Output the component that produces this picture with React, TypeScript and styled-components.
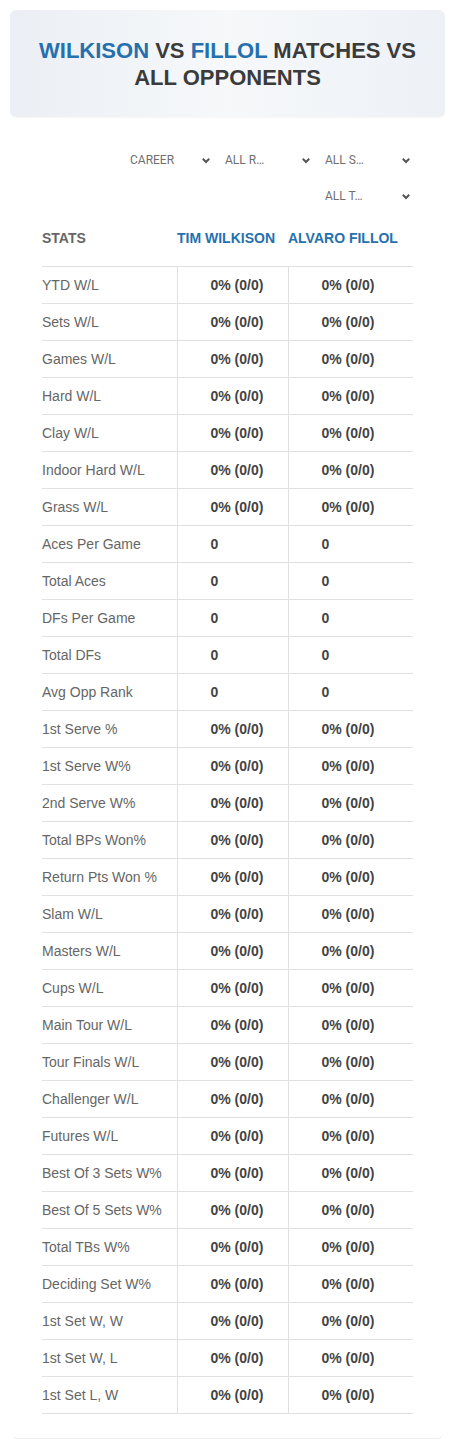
import styled, { createGlobalStyle } from 'styled-components'

const GlobalStyle = createGlobalStyle`
  body {
    margin: 0;
    background: #fff;
    font-family: "Liberation Sans", Arial, sans-serif;
  }
`

const stats: { label: string; count?: boolean }[] = [
  { label: 'YTD W/L' },
  { label: 'Sets W/L' },
  { label: 'Games W/L' },
  { label: 'Hard W/L' },
  { label: 'Clay W/L' },
  { label: 'Indoor Hard W/L' },
  { label: 'Grass W/L' },
  { label: 'Aces Per Game', count: true },
  { label: 'Total Aces', count: true },
  { label: 'DFs Per Game', count: true },
  { label: 'Total DFs', count: true },
  { label: 'Avg Opp Rank', count: true },
  { label: '1st Serve %' },
  { label: '1st Serve W%' },
  { label: '2nd Serve W%' },
  { label: 'Total BPs Won%' },
  { label: 'Return Pts Won %' },
  { label: 'Slam W/L' },
  { label: 'Masters W/L' },
  { label: 'Cups W/L' },
  { label: 'Main Tour W/L' },
  { label: 'Tour Finals W/L' },
  { label: 'Challenger W/L' },
  { label: 'Futures W/L' },
  { label: 'Best Of 3 Sets W%' },
  { label: 'Best Of 5 Sets W%' },
  { label: 'Total TBs W%' },
  { label: 'Deciding Set W%' },
  { label: '1st Set W, W' },
  { label: '1st Set W, L' },
  { label: '1st Set L, W' },
]

const filters = [
  { label: 'CAREER', width: 95 },
  { label: 'ALL R…', width: 100 },
  { label: 'ALL S…', width: 100 },
  { label: 'ALL T…', width: 100 },
]

function Chevron() {
  return (
    <svg width="10" height="7" viewBox="0 0 10 7">
      <path d="M1.8 1.8 L5 5 L8.2 1.8" fill="none" stroke="#555" strokeWidth="2" />
    </svg>
  )
}

export default function App() {
  return (
    <>
      <GlobalStyle />
      <Hero>
        <Title>
          <Name>WILKISON</Name> VS <Name>FILLOL</Name> MATCHES VS ALL OPPONENTS
        </Title>
      </Hero>
      <Panel>
        <Filters>
          {filters.map(f => (
            <Select key={f.label} $width={f.width}>
              <span>{f.label}</span>
              <Chevron />
            </Select>
          ))}
        </Filters>
        <Table>
          <colgroup>
            <col style={{ width: 135 }} />
            <col style={{ width: 111 }} />
            <col style={{ width: 125 }} />
          </colgroup>
          <thead>
            <tr>
              <HeadCell>STATS</HeadCell>
              <HeadCell $player>TIM WILKISON</HeadCell>
              <HeadCell $player>ALVARO FILLOL</HeadCell>
            </tr>
          </thead>
          <tbody>
            {stats.map(s => (
              <Row key={s.label}>
                <Label>{s.label}</Label>
                <Value>{s.count ? '0' : '0% (0/0)'}</Value>
                <Value>{s.count ? '0' : '0% (0/0)'}</Value>
              </Row>
            ))}
          </tbody>
        </Table>
      </Panel>
    </>
  )
}

const Hero = styled.header`
  margin: 10px 10px 0;
  height: 107px;
  box-sizing: border-box;
  padding: 0 20px;
  border-radius: 6px;
  background: linear-gradient(90deg, #ebeff4 0%, #f6f8fa 50%, #edf1f6 100%);
  box-shadow: 0 1px 2px rgba(0, 0, 0, 0.04);
  display: flex;
  align-items: center;
  justify-content: center;
`

const Title = styled.h1`
  margin: 0;
  font-size: 22px;
  line-height: 27px;
  font-weight: 700;
  color: #3b3b3b;
  text-align: center;
`

const Name = styled.span`
  color: #2670ae;
`

const Panel = styled.section`
  margin: 25px 12px 0;
  padding: 0 30px 24px;
  border-bottom: 1px solid #eeeeee;
  border-radius: 0 0 6px 6px;
`

const Filters = styled.div`
  display: flex;
  flex-wrap: wrap;
  justify-content: flex-end;
  margin-right: -2px;
`

const Select = styled.div<{ $width: number }>`
  width: ${({ $width }) => $width}px;
  height: 36px;
  box-sizing: border-box;
  padding: 0 4px 0 10px;
  display: flex;
  align-items: center;
  justify-content: space-between;
  font-family: Roboto, "Noto Sans", sans-serif;
  font-size: 12px;
  color: #707070;
`

const Table = styled.table`
  width: 371px;
  table-layout: fixed;
  border-collapse: collapse;
`

const HeadCell = styled.th<{ $player?: boolean }>`
  padding: 16px 0 20px;
  height: 52px;
  box-sizing: border-box;
  text-align: left;
  font-size: 14px;
  line-height: 16px;
  font-weight: 700;
  color: ${({ $player }) => ($player ? '#2670ae' : '#666')};
  white-space: nowrap;
  border-bottom: 1px solid #e0e0e0;
`

const Row = styled.tr`
  height: 37px;
  border-bottom: 1px solid #e0e0e0;
`

const Label = styled.td`
  padding: 0;
  font-size: 14px;
  color: #666;
  white-space: nowrap;
`

const Value = styled.td`
  padding: 0 0 0 33px;
  font-size: 14px;
  font-weight: 700;
  color: #444;
  border-left: 1px solid #e0e0e0;
  white-space: nowrap;
`
